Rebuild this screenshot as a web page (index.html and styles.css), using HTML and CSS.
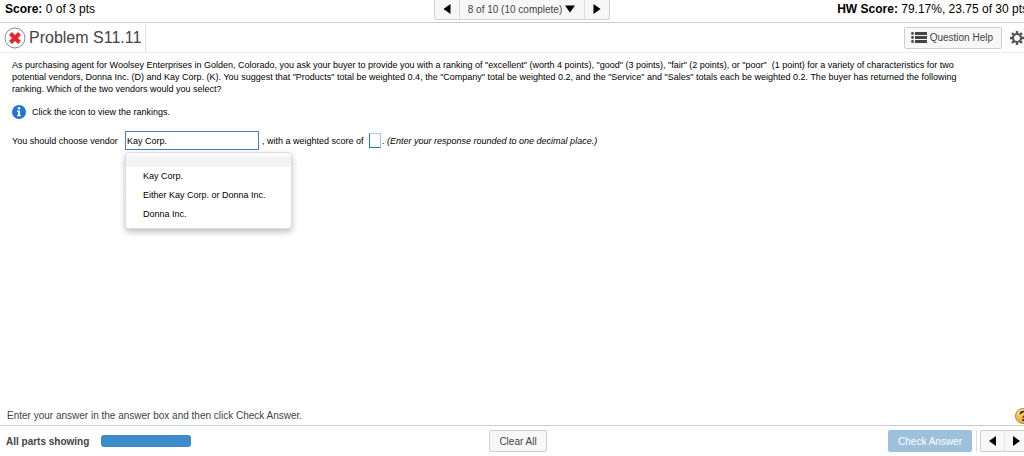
FILE: index.html
```html
<!DOCTYPE html>
<html lang="en">
<head>
<meta charset="utf-8">
<title>Problem S11.11</title>
<link rel="stylesheet" href="styles.css">
</head>
<body>
<div class="page">
  <header class="scorebar">
    <div class="score"><b>Score:</b> 0 of 3 pts</div>
    <nav class="pager" aria-label="Questions">
      <button class="pager-btn" aria-label="Previous question"><svg width="8" height="10" viewBox="0 0 8 10"><path d="M7.500 0v10L0.500 5z"/></svg></button>
      <button class="pager-btn pager-current">8 of 10 (10 complete)<svg width="10" height="8" viewBox="0 0 10 8"><path d="M0 0.500h10L5 7.500z"/></svg></button>
      <button class="pager-btn" aria-label="Next question"><svg width="8" height="10" viewBox="0 0 8 10"><path d="M0.500 0v10L7.500 5z"/></svg></button>
    </nav>
    <div class="score score-hw"><b>HW Score:</b> 79.17%, 23.75 of 30 pts</div>
  </header>

  <div class="titlebar">
    <svg class="status" width="22" height="22" viewBox="0 0 22 22"><circle cx="11" cy="11" r="10" fill="#fff" stroke="#8a8a8a"/><path d="M6.500 6.500l9 9M15.500 6.500l-9 9" stroke="#e3262c" stroke-width="4.200"/></svg>
    <h1 class="title">Problem S11.11</h1>
    <button class="btn help"><svg width="16" height="11" viewBox="0 0 16 11" fill="#444"><path d="M4 0h12v3H4zM4 4h12v3H4zM4 8h12v3H4z"/><circle cx="1.500" cy="1.500" r="1.400"/><circle cx="1.500" cy="5.500" r="1.400"/><circle cx="1.500" cy="9.500" r="1.400"/></svg>Question Help</button>
    <button class="gear" aria-label="Settings"><svg width="14" height="14" viewBox="0 0 14 14" fill="none" stroke="#555"><circle cx="7" cy="7" r="4" stroke-width="2.200"/><path d="M7 0v3M7 11v3M0 7h3M11 7h3M2 2l2.200 2.200M9.800 9.800L12 12M12 2L9.800 4.200M4.200 9.800L2 12" stroke-width="2.400"/></svg></button>
  </div>

  <main class="content">
    <p class="question">As purchasing agent for Woolsey Enterprises in Golden, Colorado, you ask your buyer to provide you with a ranking of "excellent" (worth 4 points), "good" (3 points), "fair" (2 points), or "poor"&nbsp; (1 point) for a variety of characteristics for two potential vendors, Donna Inc. (D) and Kay Corp. (K). You suggest that "Products" total be weighted 0.4, the "Company" total be weighted 0.2, and the "Service" and "Sales" totals each be weighted 0.2. The buyer has returned the following ranking. Which of the two vendors would you select?</p>
    <div class="info">
      <button class="info-btn" aria-label="View the rankings"><svg width="14" height="14" viewBox="0 0 14 14"><circle cx="7" cy="7" r="7" fill="#1c78d4"/><path d="M5 5.500h3v4.500h1v1.200H5V10h1V6.700H5z" fill="#fff"/><circle cx="7" cy="3.300" r="1.200" fill="#fff"/></svg></button>
      <span>Click the icon to view the rankings.</span>
    </div>
    <div class="answer">
      <label class="lead" for="vendor">You should choose vendor</label>
      <div class="combo">
        <select id="vendor" class="vendor">
          <option></option>
          <option selected>Kay Corp.</option>
          <option>Either Kay Corp. or Donna Inc.</option>
          <option>Donna Inc.</option>
        </select>
        <ul class="menu" role="listbox" aria-label="Vendor">
          <li class="menu-item menu-blank" role="option"></li>
          <li class="menu-item" role="option">Kay Corp.</li>
          <li class="menu-item" role="option">Either Kay Corp. or Donna Inc.</li>
          <li class="menu-item" role="option">Donna Inc.</li>
        </ul>
      </div>
      <label class="middle" for="weighted">, with a weighted score of</label>
      <div class="tail">
        <input id="weighted" class="weighted" type="text">
        <span>. <i>(Enter your response rounded to one decimal place.)</i></span>
      </div>
    </div>
  </main>

  <div class="hint">
    <span>Enter your answer in the answer box and then click Check Answer.</span>
    <button class="hint-btn" aria-label="Help"><svg width="16" height="16" viewBox="0 0 16 16"><defs><linearGradient id="gold" x2="0" y2="1"><stop stop-color="#ffe28a"/><stop offset="1" stop-color="#efa52b"/></linearGradient></defs><circle cx="8" cy="8" r="7.500" fill="url(#gold)" stroke="#a88a55"/><path d="M5.500 6.200c0-3.400 5.200-3.200 5.200-.2 0 1.800-2.500 1.900-2.500 3.800M8.200 11v2" fill="none" stroke="#3c3428" stroke-width="1.800"/></svg></button>
  </div>

  <footer class="footer">
    <div class="parts"><span>All parts showing</span><div class="bar"></div></div>
    <button class="btn clear">Clear All</button>
    <div class="actions">
      <button class="btn check">Check Answer</button>
      <div class="steps">
        <button class="step" aria-label="Previous"><svg width="7" height="10" viewBox="0 0 7 10"><path d="M7 0v10L0 5z"/></svg></button>
        <button class="step" aria-label="Next"><svg width="7" height="10" viewBox="0 0 7 10"><path d="M0 0v10l7-5z"/></svg></button>
      </div>
    </div>
  </footer>
</div>
</body>
</html>
```
FILE: styles.css
```css
* { box-sizing: border-box; }

body {
  margin: 0;
  overflow-x: hidden;
  background: #fff;
  color: #000;
  font-family: "Liberation Sans", Arial, sans-serif;
  font-size: 9px;
}

button, input, select { font: inherit; color: inherit; }
button { padding: 0; border: 0; background: none; }
svg { display: block; flex: none; }

.page {
  display: flex;
  flex-direction: column;
  min-height: 100vh;
  overflow-x: hidden;
}

.scorebar {
  display: grid;
  grid-template-columns: 1fr auto 1fr;
  align-items: start;
  height: 23px;
  padding-left: 5px;
  border-bottom: 1px solid #c5cbdc;
  font-size: 12px;
}
.score { line-height: 18px; white-space: nowrap; }
.score-hw { justify-self: end; margin-right: -4px; }

.pager {
  display: flex;
  height: 20px;
  margin-left: 14px;
  border: 1px solid #d2d2d2;
  border-top: 0;
  border-radius: 0 0 3px 3px;
  background: #f7f7f7;
}
.pager-btn {
  display: flex;
  align-items: center;
  justify-content: center;
  width: 24px;
  padding-bottom: 1px;
}
.pager-current {
  gap: 3px;
  width: 126px;
  border: solid #dcdcdc;
  border-width: 0 1px;
  color: #444;
  font-size: 10px;
}
.pager-current svg { fill: #000; }

.titlebar {
  display: flex;
  align-items: center;
  height: 30px;
  padding-left: 4px;
  border-bottom: 1px solid #e8eaf0;
}
.title {
  margin: 0;
  padding: 0 4px 0 3px;
  border-right: 1px solid #dde0ea;
  color: #444;
  font-size: 16px;
  font-weight: 400;
  line-height: 28px;
}
.btn {
  height: 22px;
  border: 1px solid #cfcfcf;
  border-radius: 2px;
  background: #f7f7f7;
  color: #444;
  font-size: 10px;
}
.help {
  display: flex;
  align-items: center;
  gap: 3px;
  margin-left: auto;
  padding: 0 8px 0 6px;
}
.gear { margin: 0 0 0 8px; }

.content {
  flex: 1;
  padding: 6px 12px;
}
.question {
  margin: 0;
  padding-right: 36px;
  line-height: 12px;
}
.info {
  display: flex;
  align-items: center;
  gap: 6px;
  margin-top: 10px;
}
.answer {
  display: flex;
  align-items: center;
  gap: 3px;
  margin-top: 12px;
}
.lead { min-width: 110px; }
.middle { min-width: 104px; }
.tail { display: flex; align-items: center; gap: 1px; }
.combo { position: relative; }
.vendor {
  display: block;
  width: 134px;
  height: 19px;
  padding: 0 1px;
  appearance: none;
  border: 1px solid #4a7bc8;
  border-radius: 0;
  background: #fff;
}
.menu {
  position: absolute;
  top: 21px;
  left: 0;
  width: 167px;
  margin: 0;
  padding: 3px 0 4px;
  border: 1px solid #ddd;
  border-radius: 4px;
  background: #fff;
  box-shadow: 0 3px 6px rgba(0, 0, 0, 0.25);
  list-style: none;
}
.menu-item {
  padding-left: 17px;
  line-height: 19px;
}
.menu-blank { height: 11px; background: #f4f4f4; }
.weighted {
  width: 12px;
  height: 15px;
  padding: 0;
  border: 1px solid #9fd0d8;
  border-bottom-color: #1a8296;
  border-left-color: #1a8296;
}

.hint {
  display: flex;
  align-items: center;
  justify-content: space-between;
  height: 19px;
  padding-left: 7px;
  color: #444;
  font-size: 10px;
}
.hint-btn { margin-right: -7px; }

.footer {
  display: grid;
  grid-template-columns: 1fr auto 1fr;
  align-items: start;
  height: 31px;
  padding: 4px 0 0 6px;
  border-top: 1px solid #c5cbd8;
}
.parts {
  display: flex;
  align-items: center;
  gap: 12px;
  height: 22px;
  color: #444;
  font-size: 10px;
  font-weight: 700;
}
.bar {
  width: 90px;
  height: 12px;
  border-radius: 3px;
  background: #3d8bca;
}
.clear { margin-left: 6px; padding: 0 9px; }
.actions {
  display: flex;
  justify-self: end;
  gap: 4px;
}
.check {
  padding: 0 9px;
  border-color: #9dc1dc;
  background: #9dc1dc;
  color: #fff;
}
.steps {
  display: flex;
  margin-right: -4px;
  padding-left: 3px;
  border-left: 1px solid #ddd;
}
.step {
  display: flex;
  align-items: center;
  justify-content: center;
  width: 24px;
  height: 22px;
  border: 1px solid #cfcfcf;
  border-right: 0;
  border-radius: 2px 0 0 2px;
  background: #f7f7f7;
}
.step + .step { border-left-color: #e4e4e4; border-radius: 0; }
```
